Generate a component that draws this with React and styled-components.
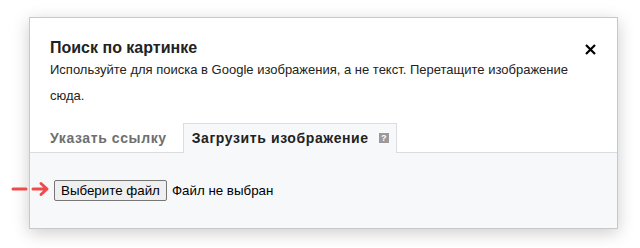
import React from "react";
import styled, { createGlobalStyle } from "styled-components";

const Global = createGlobalStyle`
  html, body { margin: 0; padding: 0; background: #ffffff; }
  body { font-family: "Liberation Sans", Arial, sans-serif; }
`;

const Page = styled.div`
  position: relative;
  width: 640px;
  height: 248px;
  padding: 17px 0 0 29px;
  box-sizing: border-box;
`;

const Dialog = styled.div`
  width: 589px;
  height: 212px;
  box-sizing: border-box;
  border: 1px solid #c8c8c8;
  background: #ffffff;
  box-shadow: 0 4px 16px rgba(0, 0, 0, 0.2);
  display: flex;
  flex-direction: column;
`;

const Header = styled.div`
  padding: 21px 20px 0 20px;
`;

const TitleRow = styled.div`
  display: flex;
  justify-content: space-between;
  align-items: flex-start;
`;

const Title = styled.div`
  font-size: 16px;
  font-weight: bold;
  color: #222222;
  line-height: 18px;
`;

const Close = styled.button`
  border: 0;
  background: none;
  padding: 0;
  margin: 4px 1px 0 0;
  width: 11px;
  height: 11px;
  display: block;
  cursor: pointer;
`;

const Desc = styled.div`
  font-size: 13px;
  line-height: 26px;
  color: #222222;
`;

const TabBar = styled.div`
  display: flex;
  margin-top: 14px;
  padding-left: 11px;
  border-bottom: 1px solid #dadce0;
  gap: 8px;
`;

const Tab = styled.div`
  display: flex;
  align-items: center;
  gap: 10px;
  height: 28px;
  padding: 0 7px 1px 8px;
  font-size: 14px;
  font-weight: bold;
  letter-spacing: 0.6px;
  color: ${(p) => (p.$active ? "#222222" : "#6f6f6f")};
  border: 1px solid ${(p) => (p.$active ? "#dadce0" : "transparent")};
  border-bottom: 0;
  background: ${(p) => (p.$active ? "#f7f8fa" : "transparent")};
  margin-bottom: -1px;
`;

const Help = styled.span`
  display: inline-flex;
  align-items: center;
  justify-content: center;
  width: 10px;
  height: 10px;
  background: #9a9a9a;
  color: #ffffff;
  font-size: 9px;
  font-weight: bold;
  line-height: 10px;
  letter-spacing: 0;
`;

const Panel = styled.div`
  flex: 1;
  background: #f7f8fa;
  padding: 27px 0 0 24px;
  display: flex;
  align-items: flex-start;
  gap: 5px;
`;

const FileButton = styled.button`
  font-family: "Liberation Sans", Arial, sans-serif;
  font-size: 13.33px;
  color: #000000;
  background: #efefef;
  border: 1px solid #767676;
  border-radius: 2px;
  padding: 1px 6px;
  height: 21px;
  line-height: 17px;
`;

const FileStatus = styled.span`
  font-size: 13.33px;
  color: #000000;
  line-height: 21px;
`;

const Arrow = styled.svg`
  position: absolute;
  left: 11px;
  top: 181px;
`;

export default function App() {
  return (
    <>
      <Global />
      <Page>
        <Dialog>
          <Header>
            <TitleRow>
              <Title>Поиск по картинке</Title>
              <Close aria-label="Закрыть">
                <svg width="11" height="11" viewBox="0 0 11 11">
                  <path d="M1 1 L10 10 M10 1 L1 10" stroke="#000" strokeWidth="2.2" />
                </svg>
              </Close>
            </TitleRow>
            <Desc>
              Используйте для поиска в Google изображения, а не текст. Перетащите изображение сюда.
            </Desc>
          </Header>
          <TabBar>
            <Tab>Указать ссылку</Tab>
            <Tab $active>
              Загрузить изображение <Help>?</Help>
            </Tab>
          </TabBar>
          <Panel>
            <FileButton>Выберите файл</FileButton>
            <FileStatus>Файл не выбран</FileStatus>
          </Panel>
        </Dialog>
        <Arrow width="40" height="16" viewBox="0 0 40 16">
          <path d="M2 8 H15" stroke="#ee4c4c" strokeWidth="3" strokeLinecap="round" />
          <path d="M22 8 H36 M30 2.5 L36 8 L30 13.5" stroke="#ee4c4c" strokeWidth="3" strokeLinecap="round" strokeLinejoin="round" fill="none" />
        </Arrow>
      </Page>
    </>
  );
}
